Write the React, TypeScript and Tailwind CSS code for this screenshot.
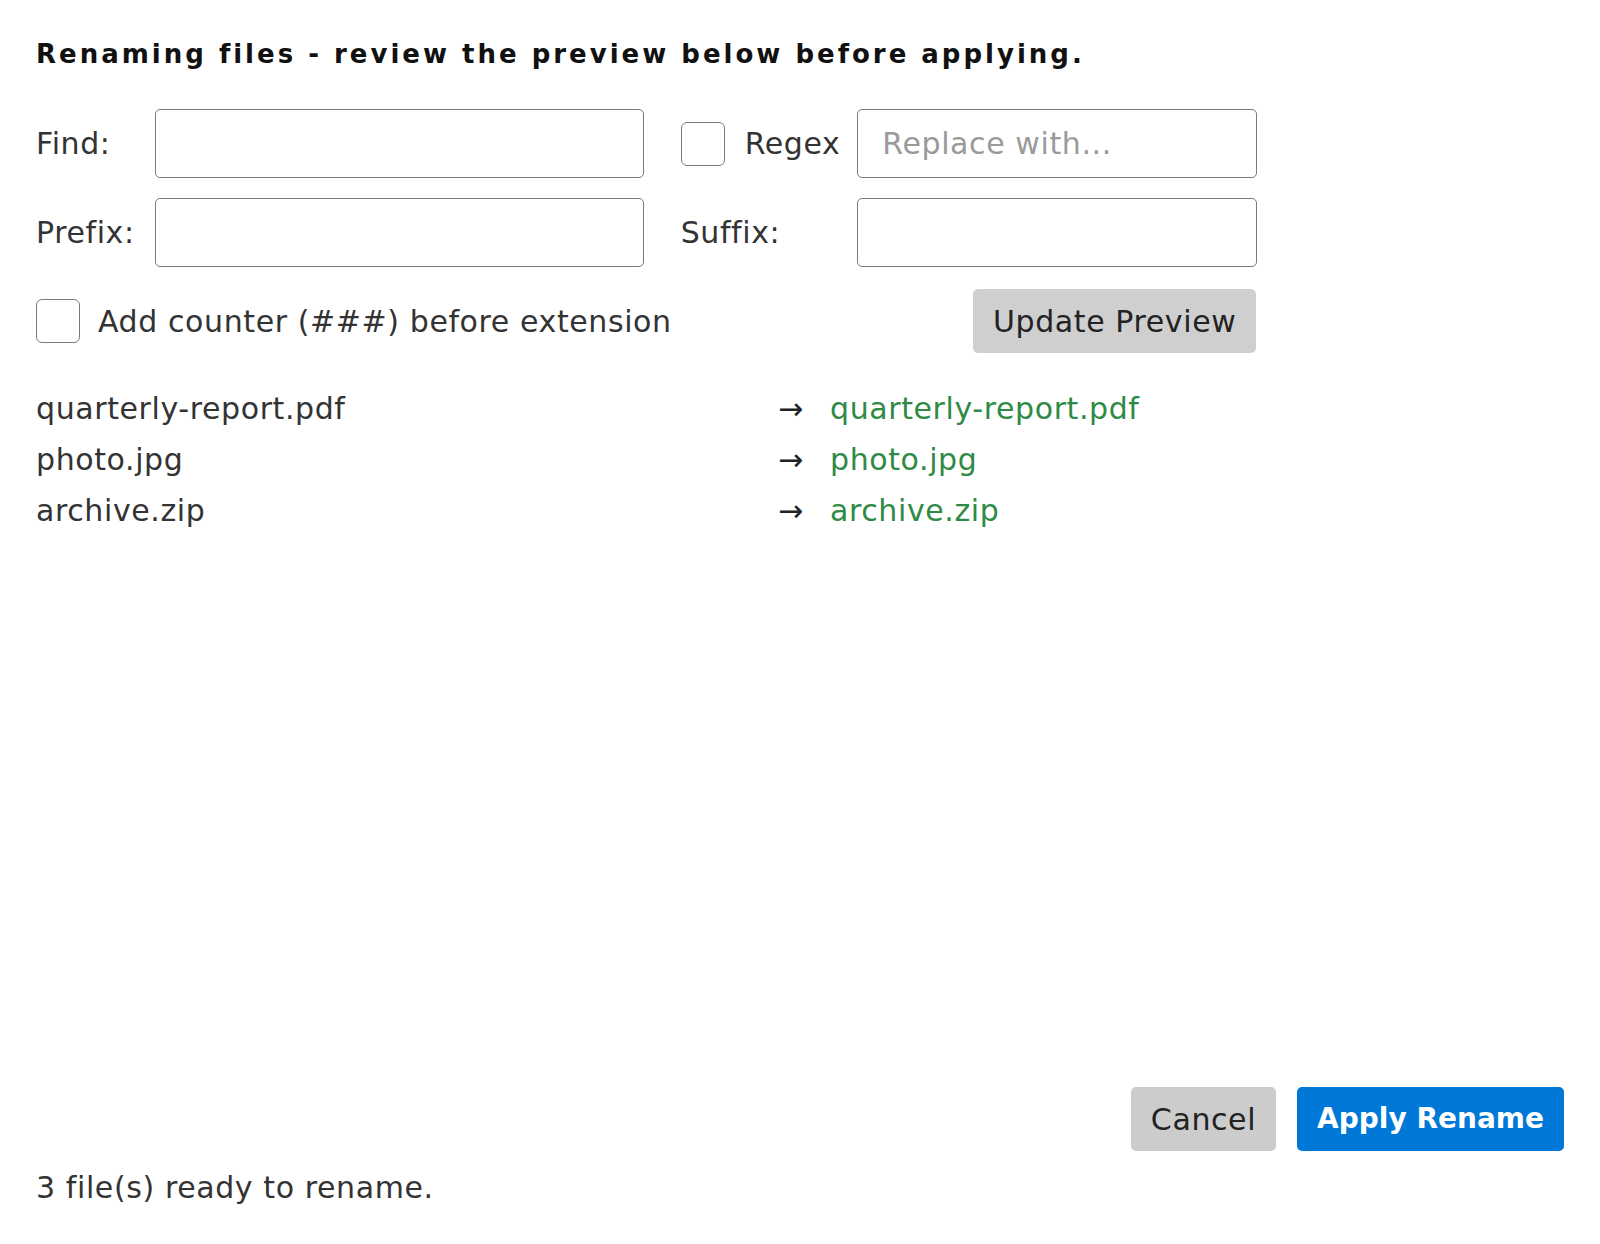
import React, { useState } from 'react';

interface FileRow {
  from: string;
  to: string;
}

const files: FileRow[] = [
  { from: 'quarterly-report.pdf', to: 'quarterly-report.pdf' },
  { from: 'photo.jpg', to: 'photo.jpg' },
  { from: 'archive.zip', to: 'archive.zip' },
];

const inputCls =
  'h-[69px] w-full rounded-[5px] border-[1.5px] border-[#7a7a7a] bg-white px-6 text-[30px] tracking-[0.6px] text-[#222] outline-none placeholder:text-[#9a9a9a]';

const boxCls =
  'h-[44px] w-[44px] shrink-0 appearance-none rounded-[6px] border-[1.5px] border-[#7a7a7a] bg-white checked:bg-[#0078d7]';

const App = () => {
  const [find, setFind] = useState('');
  const [replace, setReplace] = useState('');
  const [prefix, setPrefix] = useState('');
  const [suffix, setSuffix] = useState('');
  const [regex, setRegex] = useState(false);
  const [counter, setCounter] = useState(false);

  return (
    <div
      className="flex h-screen flex-col bg-white px-9 pt-9 pb-[34px] text-[30px] tracking-[0.6px] text-[#333]"
      style={{ fontFamily: '"DejaVu Sans", Verdana, sans-serif' }}
    >
      <h1 className="text-[26px] leading-[36px] font-bold tracking-[3px] text-[#111]">
        Renaming files - review the preview below before applying.
      </h1>

      <div className="mt-[37px] w-fit">
        <div className="grid grid-cols-[auto_489px_auto_400px] items-center gap-y-5">
          <label className="pr-5">Find:</label>
          <input className={inputCls} value={find} onChange={(e) => setFind(e.target.value)} />
          <label className="ml-[37px] mr-[17px] flex items-center gap-5">
            <input
              type="checkbox"
              className={boxCls}
              checked={regex}
              onChange={(e) => setRegex(e.target.checked)}
            />
            <span>Regex</span>
          </label>
          <input
            className={inputCls}
            placeholder="Replace with..."
            value={replace}
            onChange={(e) => setReplace(e.target.value)}
          />

          <label className="pr-5">Prefix:</label>
          <input className={inputCls} value={prefix} onChange={(e) => setPrefix(e.target.value)} />
          <label className="ml-[37px] mr-[17px]">Suffix:</label>
          <input className={inputCls} value={suffix} onChange={(e) => setSuffix(e.target.value)} />
        </div>

        <div className="mt-[22px] flex items-center justify-between">
          <label className="flex items-center gap-[18px]">
            <input
              type="checkbox"
              className={boxCls}
              checked={counter}
              onChange={(e) => setCounter(e.target.checked)}
            />
            <span>Add counter (###) before extension</span>
          </label>
          <button className="mr-px h-[64px] rounded-[5px] bg-[#cfcfcf] px-5 text-[#222]">
            Update Preview
          </button>
        </div>
      </div>

      <div className="mt-[30px] grid grid-cols-[742px_52px_auto] leading-[51px]">
        {files.map((f) => (
          <React.Fragment key={f.from}>
            <div>{f.from}</div>
            <div className="text-[#222]">→</div>
            <div className="text-[#2f8a46]">{f.to}</div>
          </React.Fragment>
        ))}
      </div>

      <div className="flex-1" />

      <div className="flex justify-end gap-[21px]">
        <button className="h-[64px] rounded-[5px] bg-[#cccccc] px-5 text-[#222]">Cancel</button>
        <button className="h-[64px] rounded-[5px] bg-[#0078d7] px-5 text-[28px] font-bold tracking-normal text-white">
          Apply Rename
        </button>
      </div>

      <p className="mt-[14px] leading-[45px]">3 file(s) ready to rename.</p>
    </div>
  );
};

export default App;
